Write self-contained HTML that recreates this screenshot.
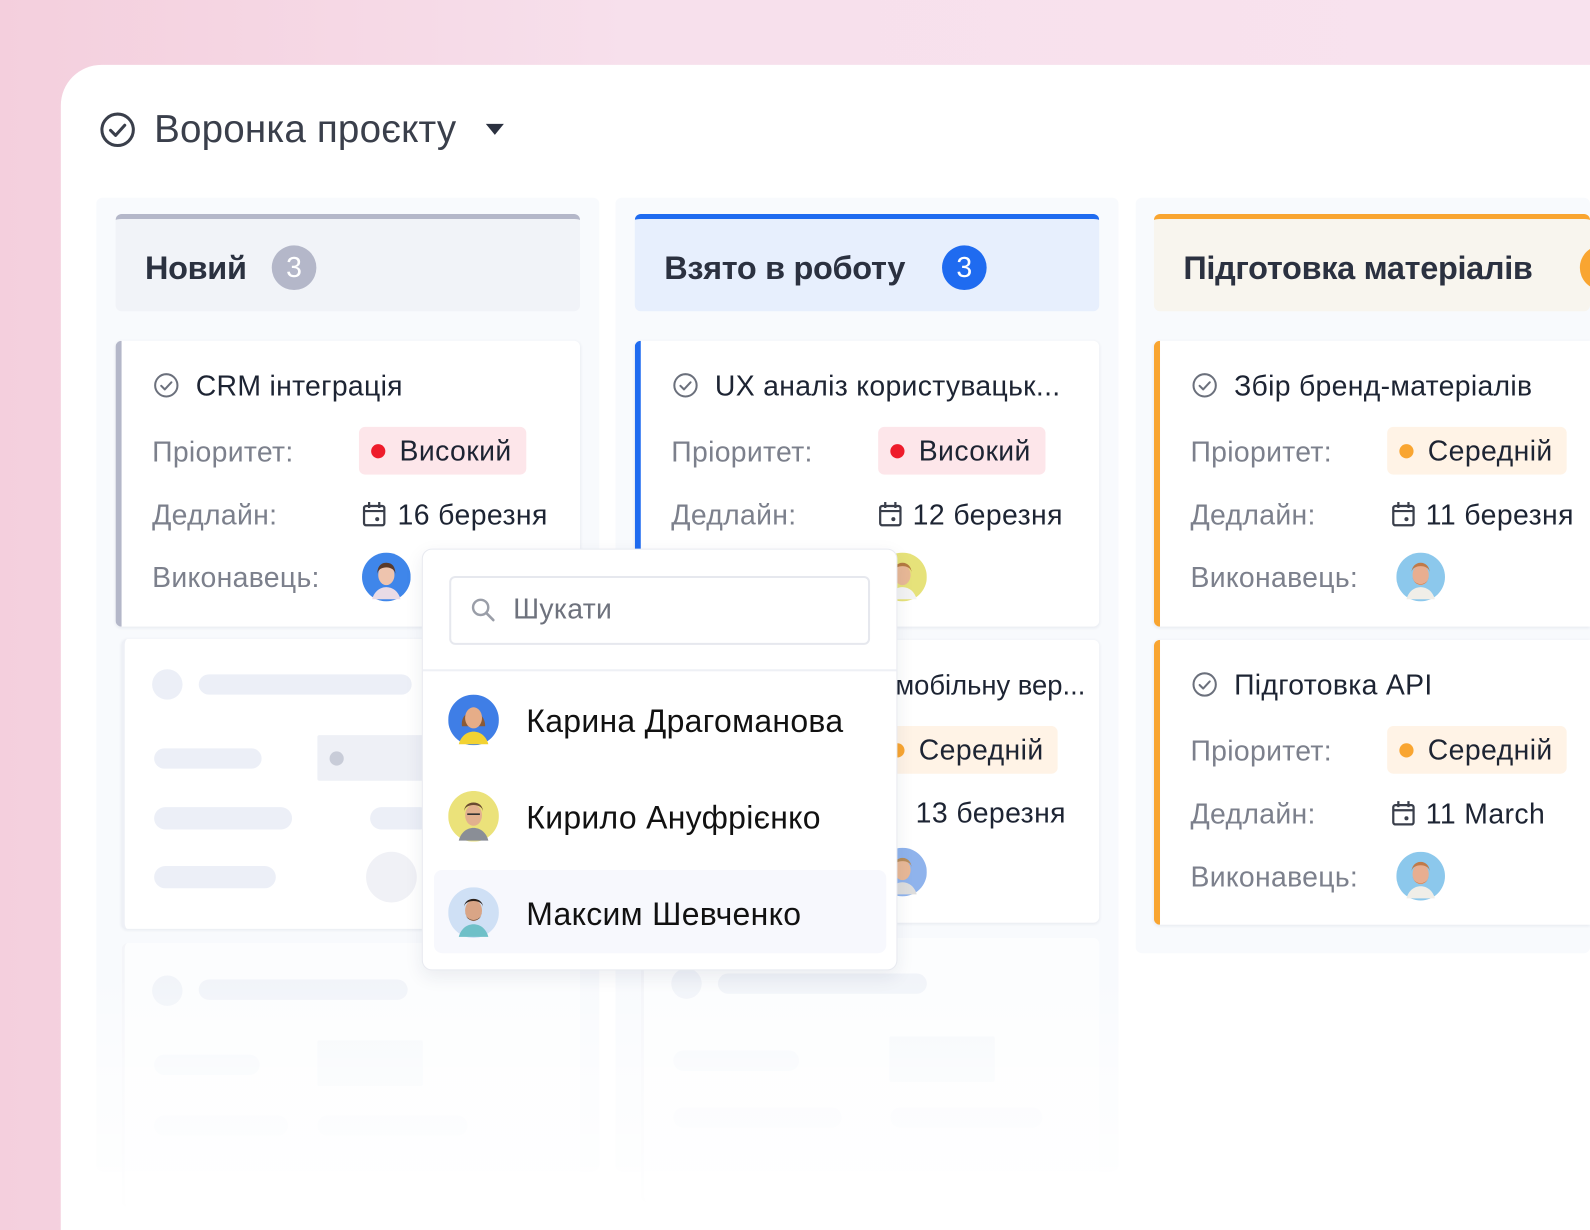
<!DOCTYPE html>
<html><head><meta charset="utf-8"><style>
*{margin:0;padding:0;box-sizing:border-box}
html,body{width:1590px;height:1230px;overflow:hidden;background:#f6dbe7}
body{font-family:"Liberation Sans","DejaVu Sans",sans-serif;position:relative}
#w{position:absolute;left:0;top:0;width:1568px;height:1213px;overflow:hidden;transform:scale(1.01403);transform-origin:0 0;background:linear-gradient(90deg,#f4cfdd 0,#f7e0ec 40%,#f8e2ee 100%)}
.a{position:absolute}
.panel{left:60px;top:64px;width:1508px;height:1149px;background:#fff;border-top-left-radius:40px}
.col{background:#f8fafd;border-radius:6px}
.hd{height:96px;border-top:5px solid;border-radius:6px}
.hd span{position:absolute;left:29px;top:30px;font-size:32px;font-weight:bold;color:#2b3140;letter-spacing:-0.3px}
.bd{position:absolute;top:26px;width:44px;height:44px;border-radius:50%;color:#fff;font-size:28px;text-align:center;line-height:44px}
.card{background:#fff;border-radius:6px;border-left:6px solid;box-shadow:0 1px 3px rgba(30,40,80,.08)}
.t{font-size:28px;color:#1d2433;white-space:nowrap;letter-spacing:.3px}
.l{font-size:28px;color:#7c808c;letter-spacing:.3px}
.v{font-size:28px;color:#1d2433;white-space:nowrap;letter-spacing:.4px}
.pill{height:47px;border-radius:6px;padding:0 14px 0 12px;display:flex;align-items:center;font-size:28px;color:#1d2433;letter-spacing:.4px}
.dot{width:14px;height:14px;border-radius:50%;margin-right:14px}
.sk{background:#eceff7;border-radius:14px}
.nm{font-size:31.5px;color:#111;letter-spacing:.3px}
</style></head><body><div id="w">
<div class="a panel"></div>

<svg class="a" style="left:98px;top:110px" width="36" height="36" viewBox="0 0 36 36"><circle cx="18" cy="18" r="15.5" fill="none" stroke="#3a3f4b" stroke-width="3"/><path d="M11 18.5l5 5 9-10" fill="none" stroke="#3a3f4b" stroke-width="3" stroke-linecap="round" stroke-linejoin="round"/></svg>
<div class="a" style="left:152px;top:107px;font-size:38px;color:#3a3f4b;letter-spacing:.2px">Воронка проєкту</div>
<svg class="a" style="left:479px;top:122px" width="18" height="12"><path d="M0 0h18L9 11z" fill="#2b3140"/></svg>

<div class="a col" style="left:95px;top:195px;width:496px;height:960px"></div>
<div class="a col" style="left:607px;top:195px;width:496px;height:960px"></div>
<div class="a col" style="left:1120px;top:195px;width:448px;height:745px"></div>

<div class="a hd" style="left:114px;top:211px;width:458px;background:#f1f3f8;border-color:#b4b7c9"><span>Новий</span><div class="bd" style="left:154px;background:#b4b7c9">3</div></div>
<div class="a hd" style="left:626px;top:211px;width:458px;background:#e7effd;border-color:#1f6bf0"><span>Взято в роботу</span><div class="bd" style="left:303px;background:#1f6bf0">3</div></div>
<div class="a hd" style="left:1138px;top:211px;width:430px;background:#f8f5ee;border-color:#f9a531"><span>Підготовка матеріалів</span><div class="bd" style="left:420px;background:#f9a531"></div></div>

<div class="a card" style="left:114px;top:336px;width:458px;height:282px;border-color:#b4b7c9"></div>
<svg class="a" style="left:151px;top:367px" width="26" height="26" viewBox="0 0 26 26"><circle cx="13" cy="13" r="11" fill="none" stroke="#6b707c" stroke-width="2"/><path d="M8 13.5l3.5 3.5 6.5-7" fill="none" stroke="#6b707c" stroke-width="2" stroke-linecap="round" stroke-linejoin="round"/></svg>
<div class="a t" style="left:193px;top:365px">CRM інтеграція</div>
<div class="a l" style="left:150px;top:430px">Пріоритет:</div>
<div class="a pill" style="left:354px;top:421px;background:#fde6ea"><div class="dot" style="background:#ee1c2b"></div>Високий</div>
<div class="a l" style="left:150px;top:492px">Дедлайн:</div>
<svg class="a" style="left:357px;top:494px" width="24" height="26" viewBox="0 0 24 26"><rect x="2" y="5" width="20" height="19" rx="2" fill="none" stroke="#3a3f4b" stroke-width="2.2"/><path d="M7 1v6M17 1v6M2 10h20" stroke="#3a3f4b" stroke-width="2.2"/><circle cx="15" cy="18" r="2" fill="#3a3f4b"/></svg>
<div class="a v" style="left:392px;top:492px">16 березня</div>
<div class="a l" style="left:150px;top:554px">Виконавець:</div>
<svg class="a" style="left:357px;top:545px" width="48" height="48" viewBox="0 0 48 48"><circle cx="24" cy="24" r="24" fill="#3f86ea"/><ellipse cx="24" cy="22" rx="8" ry="10" fill="#eec4ae"/><path d="M15 22c0-10 18-10 18 0c0-8-3-12-9-12s-9 4-9 12z" fill="#5a3a2a"/><path d="M10 46c2-8 8-12 14-12s12 4 14 12z" fill="#e9dbe6"/></svg>

<div class="a card" style="left:120px;top:630px;width:452px;height:286px;border-left:3px solid #eef0f6"></div>
<div class="a sk" style="left:150px;top:660px;width:30px;height:30px;border-radius:50%"></div>
<div class="a sk" style="left:196px;top:665px;width:210px;height:20px"></div>
<div class="a sk" style="left:152px;top:738px;width:106px;height:20px"></div>
<div class="a sk" style="left:313px;top:725px;width:110px;height:45px;border-radius:2px;background:#eef0f6"></div>
<div class="a" style="left:325px;top:741px;width:14px;height:14px;border-radius:50%;background:#c8ccd8"></div>
<div class="a sk" style="left:152px;top:796px;width:136px;height:22px"></div>
<div class="a sk" style="left:365px;top:796px;width:60px;height:22px"></div>
<div class="a sk" style="left:152px;top:854px;width:120px;height:22px"></div>
<div class="a sk" style="left:361px;top:840px;width:50px;height:50px;border-radius:50%;background:#f0f1f6"></div>

<div class="a card" style="left:120px;top:930px;width:452px;height:260px;border-left:3px solid #f3f4f8;box-shadow:none;opacity:.7"></div>
<div class="a sk" style="left:150px;top:962px;width:30px;height:30px;border-radius:50%;opacity:.7"></div>
<div class="a sk" style="left:196px;top:966px;width:206px;height:20px;opacity:.7"></div>
<div class="a sk" style="left:152px;top:1040px;width:104px;height:20px;opacity:.4"></div>
<div class="a sk" style="left:313px;top:1026px;width:104px;height:45px;border-radius:2px;opacity:.4"></div>
<div class="a sk" style="left:152px;top:1100px;width:132px;height:20px;opacity:.3"></div>
<div class="a sk" style="left:313px;top:1100px;width:148px;height:20px;opacity:.3"></div>

<div class="a card" style="left:626px;top:336px;width:458px;height:282px;border-color:#1f6bf0"></div>
<svg class="a" style="left:663px;top:367px" width="26" height="26" viewBox="0 0 26 26"><circle cx="13" cy="13" r="11" fill="none" stroke="#6b707c" stroke-width="2"/><path d="M8 13.5l3.5 3.5 6.5-7" fill="none" stroke="#6b707c" stroke-width="2" stroke-linecap="round" stroke-linejoin="round"/></svg>
<div class="a t" style="left:705px;top:365px">UX аналіз користувацьк...</div>
<div class="a l" style="left:662px;top:430px">Пріоритет:</div>
<div class="a pill" style="left:866px;top:421px;background:#fde6ea"><div class="dot" style="background:#ee1c2b"></div>Високий</div>
<div class="a l" style="left:662px;top:492px">Дедлайн:</div>
<svg class="a" style="left:866px;top:494px" width="24" height="26" viewBox="0 0 24 26"><rect x="2" y="5" width="20" height="19" rx="2" fill="none" stroke="#3a3f4b" stroke-width="2.2"/><path d="M7 1v6M17 1v6M2 10h20" stroke="#3a3f4b" stroke-width="2.2"/><circle cx="15" cy="18" r="2" fill="#3a3f4b"/></svg>
<div class="a v" style="left:900px;top:492px">12 березня</div>
<svg class="a" style="left:866px;top:545px" width="48" height="48" viewBox="0 0 48 48"><circle cx="24" cy="24" r="24" fill="#e6e27a"/><ellipse cx="24" cy="22" rx="8" ry="10" fill="#e8b896"/><path d="M15 20c0-9 18-9 18 0c0-6-4-10-9-10s-9 4-9 10z" fill="#b47a40"/><path d="M10 46c2-8 8-12 14-12s12 4 14 12z" fill="#f3f3f3"/></svg>

<div class="a card" style="left:632px;top:631px;width:452px;height:279px;border-left:3px solid #eef0f6"></div>
<div class="a t" style="left:705px;top:661px;font-size:27px;letter-spacing:0">Адаптація під мобільну вер...</div>
<div class="a pill" style="left:866px;top:716px;background:#fff3e6"><div class="dot" style="background:#f9a531"></div>Середній</div>
<div class="a v" style="left:903px;top:786px">13 березня</div>
<svg class="a" style="left:866px;top:836px" width="48" height="48" viewBox="0 0 48 48"><circle cx="24" cy="24" r="24" fill="#8fb3ec"/><ellipse cx="24" cy="22" rx="8" ry="10" fill="#e8b896"/><path d="M15 20c0-9 18-9 18 0c0-6-4-10-9-10s-9 4-9 10z" fill="#b78c5a"/><path d="M10 46c2-8 8-12 14-12s12 4 14 12z" fill="#ddd"/></svg>

<div class="a card" style="left:632px;top:925px;width:452px;height:260px;border-left:3px solid #f3f4f8;box-shadow:none;opacity:.7"></div>
<div class="a sk" style="left:662px;top:955px;width:30px;height:30px;border-radius:50%;opacity:.7"></div>
<div class="a sk" style="left:708px;top:960px;width:206px;height:20px;opacity:.7"></div>
<div class="a sk" style="left:664px;top:1036px;width:124px;height:20px;opacity:.4"></div>
<div class="a sk" style="left:877px;top:1022px;width:104px;height:45px;border-radius:2px;opacity:.4"></div>
<div class="a sk" style="left:664px;top:1092px;width:166px;height:20px;opacity:.3"></div>
<div class="a sk" style="left:878px;top:1092px;width:150px;height:20px;opacity:.3"></div>

<div class="a card" style="left:1138px;top:336px;width:430px;height:282px;border-color:#f9a531;border-radius:6px 0 0 6px"></div>
<svg class="a" style="left:1175px;top:367px" width="26" height="26" viewBox="0 0 26 26"><circle cx="13" cy="13" r="11" fill="none" stroke="#6b707c" stroke-width="2"/><path d="M8 13.5l3.5 3.5 6.5-7" fill="none" stroke="#6b707c" stroke-width="2" stroke-linecap="round" stroke-linejoin="round"/></svg>
<div class="a t" style="left:1217px;top:365px">Збір бренд-матеріалів</div>
<div class="a l" style="left:1174px;top:430px">Пріоритет:</div>
<div class="a pill" style="left:1368px;top:421px;background:#fff3e6"><div class="dot" style="background:#f9a531"></div>Середній</div>
<div class="a l" style="left:1174px;top:492px">Дедлайн:</div>
<svg class="a" style="left:1372px;top:494px" width="24" height="26" viewBox="0 0 24 26"><rect x="2" y="5" width="20" height="19" rx="2" fill="none" stroke="#3a3f4b" stroke-width="2.2"/><path d="M7 1v6M17 1v6M2 10h20" stroke="#3a3f4b" stroke-width="2.2"/><circle cx="15" cy="18" r="2" fill="#3a3f4b"/></svg>
<div class="a v" style="left:1406px;top:492px">11 березня</div>
<div class="a l" style="left:1174px;top:554px">Виконавець:</div>
<svg class="a" style="left:1377px;top:545px" width="48" height="48" viewBox="0 0 48 48"><circle cx="24" cy="24" r="24" fill="#8cc8ec"/><ellipse cx="24" cy="22" rx="8" ry="10" fill="#e8ae90"/><path d="M16 24c1 10 15 10 16 0c0 4-4 7-8 7s-8-3-8-7z" fill="#c57a4a"/><path d="M15 20c0-9 18-9 18 0c0-6-4-10-9-10s-9 4-9 10z" fill="#c07a48"/><path d="M10 46c2-8 8-12 14-12s12 4 14 12z" fill="#f0eee8"/></svg>

<div class="a card" style="left:1138px;top:631px;width:430px;height:281px;border-color:#f9a531;border-radius:6px 0 0 6px"></div>
<svg class="a" style="left:1175px;top:662px" width="26" height="26" viewBox="0 0 26 26"><circle cx="13" cy="13" r="11" fill="none" stroke="#6b707c" stroke-width="2"/><path d="M8 13.5l3.5 3.5 6.5-7" fill="none" stroke="#6b707c" stroke-width="2" stroke-linecap="round" stroke-linejoin="round"/></svg>
<div class="a t" style="left:1217px;top:660px">Підготовка API</div>
<div class="a l" style="left:1174px;top:725px">Пріоритет:</div>
<div class="a pill" style="left:1368px;top:716px;background:#fff3e6"><div class="dot" style="background:#f9a531"></div>Середній</div>
<div class="a l" style="left:1174px;top:787px">Дедлайн:</div>
<svg class="a" style="left:1372px;top:789px" width="24" height="26" viewBox="0 0 24 26"><rect x="2" y="5" width="20" height="19" rx="2" fill="none" stroke="#3a3f4b" stroke-width="2.2"/><path d="M7 1v6M17 1v6M2 10h20" stroke="#3a3f4b" stroke-width="2.2"/><circle cx="15" cy="18" r="2" fill="#3a3f4b"/></svg>
<div class="a v" style="left:1406px;top:787px">11 March</div>
<div class="a l" style="left:1174px;top:849px">Виконавець:</div>
<svg class="a" style="left:1377px;top:840px" width="48" height="48" viewBox="0 0 48 48"><circle cx="24" cy="24" r="24" fill="#8cc8ec"/><ellipse cx="24" cy="22" rx="8" ry="10" fill="#e8ae90"/><path d="M16 24c1 10 15 10 16 0c0 4-4 7-8 7s-8-3-8-7z" fill="#c57a4a"/><path d="M15 20c0-9 18-9 18 0c0-6-4-10-9-10s-9 4-9 10z" fill="#c07a48"/><path d="M10 46c2-8 8-12 14-12s12 4 14 12z" fill="#f0eee8"/></svg>

<div class="a" style="left:60px;top:960px;width:1508px;height:253px;background:linear-gradient(180deg,rgba(255,255,255,0) 0,rgba(255,255,255,.55) 40%,rgba(255,255,255,.95) 100%)"></div>

<div class="a" style="left:416px;top:541px;width:469px;height:416px;background:#fff;border:1px solid #e8eaf0;border-radius:10px;box-shadow:0 6px 18px rgba(30,40,80,.08)"></div>
<div class="a" style="left:443px;top:568px;width:415px;height:68px;border:2px solid #e6e8ee;border-radius:6px"></div>
<svg class="a" style="left:464px;top:589px" width="26" height="26" viewBox="0 0 26 26"><circle cx="10" cy="10" r="7.5" fill="none" stroke="#9a9ea8" stroke-width="2.4"/><path d="M15.5 15.5l7 7" stroke="#9a9ea8" stroke-width="2.6" stroke-linecap="round"/></svg>
<div class="a" style="left:506px;top:585px;font-size:28px;color:#6e727d;letter-spacing:.3px">Шукати</div>
<div class="a" style="left:417px;top:660px;width:467px;height:2px;background:#eef0f5"></div>
<div class="a" style="left:428px;top:858px;width:446px;height:82px;background:#f7f8fd;border-radius:8px"></div>

<svg class="a" style="left:442px;top:685px" width="50" height="50" viewBox="0 0 48 48"><circle cx="24" cy="24" r="24" fill="#3f7ee6"/><path d="M13 30c-2-18 22-18 22 0z" fill="#8a5a36"/><ellipse cx="24" cy="22" rx="8" ry="10" fill="#e6ad88"/><path d="M10 47c2-8 8-12 14-12s12 4 14 12z" fill="#f2d232"/></svg>
<div class="a nm" style="left:519px;top:693px">Карина Драгоманова</div>
<svg class="a" style="left:442px;top:780px" width="50" height="50" viewBox="0 0 48 48"><circle cx="24" cy="24" r="24" fill="#ebe27a"/><ellipse cx="24" cy="23" rx="8" ry="10" fill="#e2b08e"/><path d="M15 20c0-9 18-9 18 0c0-6-4-9-9-9s-9 3-9 9z" fill="#6a4a32"/><path d="M18 22h12" stroke="#333" stroke-width="1.5"/><path d="M10 47c2-8 8-12 14-12s12 4 14 12z" fill="#8a8e96"/></svg>
<div class="a nm" style="left:519px;top:788px">Кирило Ануфрієнко</div>
<svg class="a" style="left:442px;top:875px" width="50" height="50" viewBox="0 0 48 48"><circle cx="24" cy="24" r="24" fill="#cfe0f5"/><ellipse cx="24" cy="22" rx="8" ry="10" fill="#d9a586"/><path d="M16 24c1 10 15 10 16 0c0 4-4 7-8 7s-8-3-8-7z" fill="#3a2a20"/><path d="M15 19c0-8 18-8 18 0c0-5-4-8-9-8s-9 3-9 8z" fill="#2c211a"/><path d="M10 47c2-8 8-12 14-12s12 4 14 12z" fill="#6fc0c8"/></svg>
<div class="a nm" style="left:519px;top:883px">Максим Шевченко</div>
</div></body></html>
